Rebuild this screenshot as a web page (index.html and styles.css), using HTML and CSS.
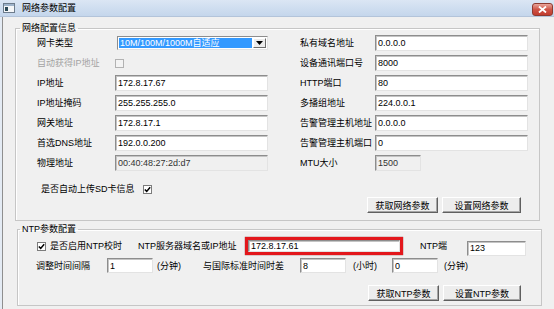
FILE: index.html
```html
<!DOCTYPE html>
<html lang="zh-CN">
<head>
  <meta charset="UTF-8" />
  <title>网络参数配置</title>
  <link rel="stylesheet" href="styles.css">
</head>
<body>
  <div class="window">
    <div class="titlebar">
      <svg class="app-icon" width="12" height="10" viewBox="0 0 12 10">
        <rect x="0.5" y="0.5" width="11" height="9" fill="#f4f6f8" stroke="#6d7c8c"/>
        <rect x="1" y="1" width="10" height="2" fill="#9fb4cb"/>
        <rect x="2" y="4" width="3" height="4" fill="#2d4a57"/>
      </svg>
      <span class="title">网络参数配置</span>
      <span class="close-btn">
        <svg width="9" height="7" viewBox="0 0 9 7">
          <path d="M1 0.5 L8 6.5 M8 0.5 L1 6.5" stroke="#fff" stroke-width="1.8"/>
        </svg>
      </span>
    </div>

    <div class="client">
      <fieldset class="group net-group">
        <legend>网络配置信息</legend>
        <div class="net-cols">
          <div class="form-grid left-grid">
            <label>网卡类型</label>
            <div class="combo">
              <span class="combo-text">10M/100M/1000M自适应</span>
              <span class="combo-btn">
                <svg width="7" height="4" viewBox="0 0 7 4"><path d="M0 0 H7 L3.5 4 Z" fill="#000"/></svg>
              </span>
            </div>
            <label class="disabled">自动获得IP地址</label>
            <span class="check check-disabled"></span>
            <label>IP地址</label>
            <input class="field" value="172.8.17.67">
            <label>IP地址掩码</label>
            <input class="field" value="255.255.255.0">
            <label>网关地址</label>
            <input class="field" value="172.8.17.1">
            <label>首选DNS地址</label>
            <input class="field" value="192.0.0.200">
            <label>物理地址</label>
            <input class="field readonly" value="00:40:48:27:2d:d7" readonly>
          </div>

          <div class="form-grid right-grid">
            <label>私有域名地址</label>
            <input class="field" value="0.0.0.0">
            <label>设备通讯端口号</label>
            <input class="field" value="8000">
            <label>HTTP端口</label>
            <input class="field" value="80">
            <label>多播组地址</label>
            <input class="field" value="224.0.0.1">
            <label>告警管理主机地址</label>
            <input class="field" value="0.0.0.0">
            <label>告警管理主机端口</label>
            <input class="field" value="0">
            <label>MTU大小</label>
            <input class="field readonly mtu" value="1500" readonly>
          </div>
        </div>

        <div class="sd-row">
          <span>是否自动上传SD卡信息</span>
          <span class="check">
            <svg width="7" height="7" viewBox="0 0 7 7"><path d="M0.8 3.5 L2.7 5.4 L6.2 1.2" fill="none" stroke="#000" stroke-width="1.5"/></svg>
          </span>
        </div>

        <div class="btn-row">
          <button class="btn btn-get">获取网络参数</button>
          <button class="btn btn-set">设置网络参数</button>
        </div>
      </fieldset>

      <fieldset class="group ntp-group">
        <legend>NTP参数配置</legend>
        <div class="ntp-row first">
          <span class="check">
            <svg width="7" height="7" viewBox="0 0 7 7"><path d="M0.8 3.5 L2.7 5.4 L6.2 1.2" fill="none" stroke="#000" stroke-width="1.5"/></svg>
          </span>
          <span class="ntp-enable">是否启用NTP校时</span>
          <span class="ntp-server-label">NTP服务器域名或IP地址</span>
          <div class="highlight-box">
            <input class="field" value="172.8.17.61">
          </div>
          <span class="ntp-port-label">NTP端</span>
          <input class="field ntp-port" value="123">
        </div>

        <div class="ntp-row second">
          <span class="interval-label">调整时间间隔</span>
          <input class="field small" value="1">
          <span class="unit unit-min">(分钟)</span>
          <span class="offset-label">与国际标准时间时差</span>
          <input class="field small" value="8">
          <span class="unit unit-hour">(小时)</span>
          <input class="field small" value="0">
          <span class="unit unit-min2">(分钟)</span>
        </div>

        <div class="btn-row ntp-btns">
          <button class="btn btn-get">获取NTP参数</button>
          <button class="btn btn-set">设置NTP参数</button>
        </div>
      </fieldset>
    </div>
  </div>
</body>
</html>
```

FILE: styles.css
```css
* {
  box-sizing: border-box;
}

body {
  margin: 0;
  font-family: "Liberation Sans", "Noto Sans CJK SC", sans-serif;
  font-size: 9px;
  line-height: 12px;
  color: #000;
  background: #f0f0f0;
}

.window {
  width: 554px;
  height: 309px;
  overflow: hidden;
  background: #e4ebf4;
}

/* title bar */
.titlebar {
  height: 17px;
  display: flex;
  align-items: center;
  padding-left: 3px;
  background: linear-gradient(#dbe6f4, #c4d6ec);
  border-bottom: 1px solid #b3c4da;
}

.app-icon {
  margin-right: 7px;
}

.title {
  flex: 1;
}

.close-btn {
  width: 21px;
  height: 13px;
  margin: 3px 1px 0 0;
  border: 1px solid #8e3a30;
  border-radius: 3px;
  background: linear-gradient(#e9a69b, #cf5446 50%, #c13c2f);
  display: flex;
  align-items: center;
  justify-content: center;
}

/* client area */
.client {
  height: 292px;
  margin-left: 2px;
  padding-top: 5px;
  border-left: 1px solid #8f8f8f;
  background: #f0f0f0;
}

.group {
  width: 525px;
  margin: 0;
  padding: 0;
  border: 1px solid #c6c6c6;
  box-shadow: inset 1px 1px 0 #fff;
}

.group legend {
  padding: 0 2px;
  line-height: 12px;
}

.net-group {
  margin-left: 12px;
}

.net-group legend {
  margin-left: 4px;
}

.ntp-group {
  margin: 2px 0 0 14px;
}

.ntp-group legend {
  margin-left: 2px;
}

/* two columns of fields */
.net-cols {
  display: flex;
  padding: 1px 0 0 21px;
}

.form-grid {
  display: grid;
  grid-auto-rows: 16px;
  row-gap: 4px;
  align-items: center;
}

.left-grid {
  grid-template-columns: 78px 153px;
}

.right-grid {
  grid-template-columns: 75px 153px;
  margin-left: 32px;
}

label {
  white-space: nowrap;
}

label.disabled {
  color: #a3a3a3;
}

.field {
  width: 100%;
  height: 16px;
  margin: 0;
  padding: 0 2px;
  font-family: "Liberation Sans", sans-serif;
  font-size: 9px;
  color: #000;
  background: #fff;
  border: 1px solid;
  border-color: #8d8d8d #e3e3e3 #e3e3e3 #8d8d8d;
  box-shadow: inset 1px 1px 0 #c4c4c4;
  outline: none;
}

.field.readonly {
  background: #f0f0f0;
  color: #333;
}

.field.mtu {
  width: 46px;
}

/* combo box */
.combo {
  width: 151px;
  height: 14px;
  margin-left: 2px;
  display: flex;
  padding: 1px;
  background: #fff;
  border: 1px solid;
  border-color: #8d8d8d #e3e3e3 #e3e3e3 #8d8d8d;
}

.combo-text {
  flex: 1;
  padding-left: 1px;
  line-height: 10px;
  color: #fff;
  background: #3399ff;
}

.combo-btn {
  width: 13px;
  margin-left: 1px;
  display: flex;
  align-items: center;
  justify-content: center;
  background: #ececec;
  border: 1px solid;
  border-color: #fff #6b6b6b #6b6b6b #fff;
}

/* check boxes */
.check {
  width: 9px;
  height: 9px;
  display: flex;
  align-items: center;
  justify-content: center;
  background: #fff;
  border: 1px solid #7c7c7c;
}

.check-disabled {
  background: #f3f3f3;
  border-color: #b2b2b2;
}

.sd-row {
  height: 12px;
  margin-top: 12px;
  padding-left: 25px;
  display: flex;
  align-items: center;
  gap: 8px;
}

/* buttons */
.btn-row {
  display: flex;
  justify-content: flex-end;
  gap: 4px;
  margin-top: 2px;
  padding: 0 18px 7px 0;
}

.btn {
  height: 16px;
  padding: 0;
  font-family: "Liberation Sans", "Noto Sans CJK SC", sans-serif;
  font-size: 9px;
  color: #000;
  background: #ededed;
  border: 1px solid;
  border-color: #fff #5f5f5f #5f5f5f #fff;
  box-shadow: inset -1px -1px 0 #a5a5a5;
}

.btn-get {
  width: 71px;
}

.btn-set {
  width: 79px;
}

.ntp-btns {
  margin-top: 12px;
  padding: 0 20px 4px 0;
}

.ntp-btns .btn-set {
  width: 78px;
}

.ntp-btns .btn-get {
  width: 71px;
}

/* NTP rows */
.ntp-row {
  display: flex;
  align-items: center;
  white-space: nowrap;
}

.ntp-row.first {
  height: 18px;
  margin-top: 2px;
  padding-left: 19px;
}

.ntp-row.second {
  height: 15px;
  margin-top: 3px;
  padding-left: 18px;
}

.ntp-enable {
  width: 88px;
  margin-left: 4px;
}

.ntp-server-label {
  width: 107px;
}

.highlight-box {
  width: 158px;
  height: 18px;
  border: 3px solid #e3171c;
  box-shadow: 0 0 1px #7a1010;
}

.highlight-box .field {
  height: 12px;
}

.ntp-port-label {
  width: 47px;
  margin-left: 17px;
}

.ntp-port {
  width: 59px;
  height: 15px;
  margin-top: 4px;
}

.interval-label {
  width: 71px;
}

.field.small {
  width: 46px;
  height: 15px;
}

.unit-min {
  width: 46px;
  margin-left: 4px;
}

.offset-label {
  width: 97px;
}

.unit-hour {
  width: 39px;
  margin-left: 7px;
}

.unit-min2 {
  margin-left: 6px;
}
```
